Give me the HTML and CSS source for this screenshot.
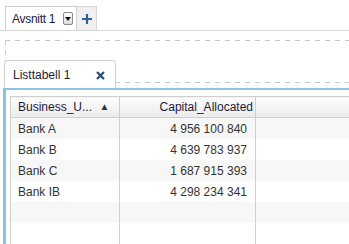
FILE: index.html
```html
<!DOCTYPE html>
<html lang="en">
<head>
    <meta charset="UTF-8">
    <title>Listtabell</title>
    <link rel="stylesheet" href="styles.css">
</head>
<body>

    <div class="toolbar">
        <div class="section-select">
            <span class="section-name">Avsnitt 1</span>
            <span class="dropdown">
                <svg width="6" height="4" viewBox="0 0 6 4"><path d="M0 0h6L3 4z" fill="#111"/></svg>
            </span>
        </div>
        <div class="add-btn">
            <svg width="10" height="10" viewBox="0 0 10 10"><path d="M5 0v10M0 5h10" stroke="#2f6196" stroke-width="2.2"/></svg>
        </div>
    </div>

    <div class="drop-zone"></div>

    <div class="tab">
        <span>Listtabell 1</span>
        <svg class="close" width="9" height="9" viewBox="0 0 9 9"><path d="M1 1l7 7M8 1L1 8" stroke="#2c4d70" stroke-width="2.2"/></svg>
    </div>

    <div class="panel">
        <table class="grid">
            <colgroup>
                <col class="col-name">
                <col class="col-value">
                <col>
            </colgroup>
            <thead>
                <tr>
                    <th class="name">Business_U... <span class="sort">▲</span></th>
                    <th class="value">Capital_Allocated</th>
                    <th></th>
                </tr>
            </thead>
            <tbody>
                <tr><td>Bank A</td><td class="num">4 956 100 840</td><td></td></tr>
                <tr><td>Bank B</td><td class="num">4 639 783 937</td><td></td></tr>
                <tr><td>Bank C</td><td class="num">1 687 915 393</td><td></td></tr>
                <tr><td>Bank IB</td><td class="num">4 298 234 341</td><td></td></tr>
                <tr><td></td><td></td><td></td></tr>
                <tr><td></td><td></td><td></td></tr>
            </tbody>
        </table>
    </div>

</body>
</html>
```

FILE: styles.css
```css
body {
    margin: 0;
    font-family: "Liberation Sans", Arial, sans-serif;
    font-size: 12px;
    color: #333;
    background: #fff;
    overflow: hidden;
    height: 244px;
}

/* top section bar */
.toolbar {
    display: flex;
    padding: 6px 0 0 5px;
    border-bottom: 1px solid #d6d6d6;
}

.section-select {
    display: flex;
    align-items: center;
    width: 72px;
    height: 24px;
    border: 1px solid #cfcfcf;
    border-bottom: none;
    box-sizing: border-box;
    background: #fff;
}

.section-name {
    padding-left: 6px;
    color: #1b1b3a;
    letter-spacing: -0.3px;
    flex: 1;
}

.dropdown {
    display: flex;
    align-items: center;
    justify-content: center;
    width: 8px;
    height: 11px;
    margin-right: 3px;
    border: 1px solid #8a8a8a;
    border-radius: 2px;
    background: linear-gradient(#fff, #dcdcdc);
}

.add-btn {
    display: flex;
    align-items: center;
    justify-content: center;
    width: 20px;
    height: 24px;
    box-sizing: border-box;
    border: 1px solid #d6d6d6;
    border-left: none;
    border-bottom: none;
    background: #f0f0f0;
}

/* dashed drop area */
.drop-zone {
    margin: 9px 0 0 5px;
    height: 43px;
    background:
        repeating-linear-gradient(90deg, #c8c8c8 0 5px, transparent 5px 10px) top left / 100% 1px no-repeat,
        repeating-linear-gradient(90deg, #c8c8c8 0 5px, transparent 5px 10px) bottom left / 100% 1px no-repeat,
        repeating-linear-gradient(180deg, #c8c8c8 0 5px, transparent 5px 10px) top left / 1px 100% no-repeat;
}

/* visualization tab */
.tab {
    display: flex;
    align-items: center;
    justify-content: space-between;
    width: 112px;
    height: 28px;
    box-sizing: border-box;
    margin: -23px 0 0 4px;
    padding: 0 10px 0 8px;
    border: 1px solid #cfcfcf;
    border-bottom: none;
    border-radius: 4px 4px 0 0;
    background: #fff;
    color: #1b1b3a;
    position: relative;
}

.close {
    margin-top: 1px;
}

/* table panel */
.panel {
    margin-left: 3px;
    padding: 6px 0 0 4px;
    border-top: 2px solid #8ac4e3;
    border-left: 3px solid #8ac4e3;
    height: 148px;
    overflow: hidden;
}

.grid {
    width: 100%;
    table-layout: fixed;
    border-collapse: collapse;
    border-top: 1px solid #cfcfcf;
    border-left: 1px solid #cfcfcf;
}

.col-name {
    width: 109px;
}

.col-value {
    width: 136px;
}

.grid th {
    height: 20px;
    padding: 0;
    font-weight: normal;
    color: #1b1b3a;
    background: linear-gradient(#fdfdfd, #ebebeb);
    border-bottom: 1px solid #cfcfcf;
    border-right: 1px solid #cfcfcf;
    white-space: nowrap;
    overflow: hidden;
}

.grid th:last-child {
    border-right: none;
}

.grid th.name {
    text-align: left;
    padding-left: 7px;
}

.sort {
    font-size: 10px;
    margin-left: 4px;
    vertical-align: 1px;
    color: #333;
}

.grid th.value {
    text-align: right;
    padding-right: 2px;
}

.grid td {
    height: 21px;
    padding: 0 0 0 7px;
    border-right: 1px solid #cfcfcf;
    white-space: nowrap;
}

.grid td:last-child {
    border-right: none;
}

.grid td.num {
    text-align: right;
    padding-right: 8px;
}

.grid tbody tr:nth-child(odd) {
    background: #f7f7f7;
}
```
